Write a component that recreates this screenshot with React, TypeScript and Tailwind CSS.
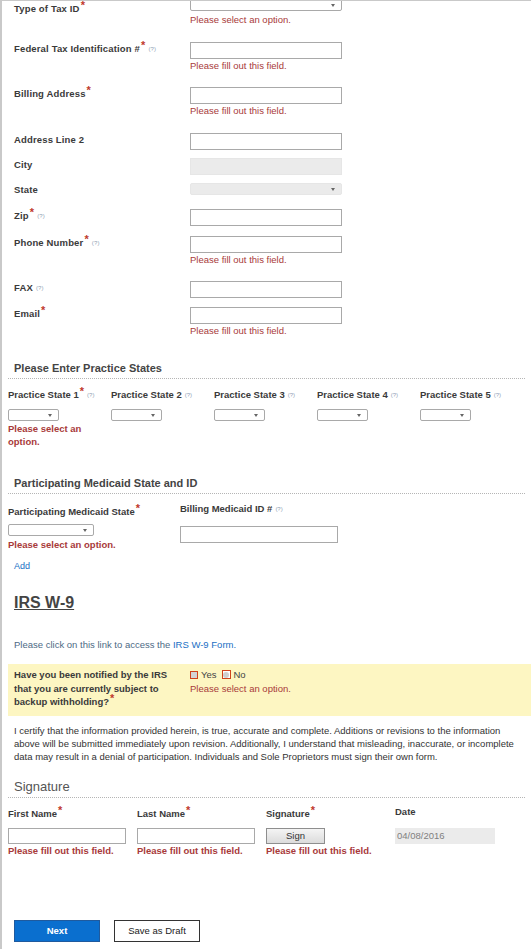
import React from "react";

const LABEL = "text-[9.5px] font-bold text-[#3a3a3a] leading-[13px]";
const ERR = "text-[9.5px] text-[#a83a3a] leading-[13px]";
const ERR_BOLD = "text-[9.5px] font-bold text-[#a83a3a] leading-[13px]";
const INPUT = "h-[17px] w-[152px] border border-[#a9a9a9] bg-white";

function Req() {
  return (
    <span className="relative -top-[3px] ml-[1px] inline-block h-[8px] text-[11px] font-bold leading-[8px] text-[#c0392b]">
      *
    </span>
  );
}

function Help() {
  return (
    <span className="relative -top-[1px] ml-[3px] text-[6px] font-normal text-[#8fa0b5]">
      (?)
    </span>
  );
}

function Select({ w, disabled }: { w: string; disabled?: boolean }) {
  return (
    <div
      className={`flex h-[12px] items-center justify-end rounded-[2px] pr-[6px] ${w} ${
        disabled
          ? "border border-[#e6e6e6] bg-[#ebebeb]"
          : "border border-[#a9a9a9] bg-white"
      }`}
    >
      <svg width="4" height="3" viewBox="0 0 4 3">
        <path d="M0 0h4L2 3z" fill="#666" />
      </svg>
    </div>
  );
}

type RowProps = {
  label: string;
  req?: boolean;
  help?: boolean;
  h: string;
  error?: string;
  children: React.ReactNode;
  labelPad?: string;
};

function Row({ label, req, help, h, error, children, labelPad = "pt-0" }: RowProps) {
  return (
    <div className={`flex ${h}`}>
      <div className={`w-[176px] tracking-[0.15px] ${LABEL} ${labelPad}`}>
        {label}
        {req && <Req />}
        {help && <Help />}
      </div>
      <div className="flex flex-col">
        {children}
        {error && <div className={ERR}>{error}</div>}
      </div>
    </div>
  );
}

function SectionHead({ title, className }: { title: string; className: string }) {
  return (
    <div className={`ml-[6px] mr-[6px] border-b border-dotted border-[#b5b5b5] pb-[3px] pl-[6px] ${className}`}>
      <h2 className="text-[11px] font-bold leading-[14px] text-[#444]">{title}</h2>
    </div>
  );
}

const PRACTICE = [1, 2, 3, 4, 5];

const SIGN_COLS = [
  { label: "First Name", kind: "input" },
  { label: "Last Name", kind: "input" },
  { label: "Signature", kind: "sign" },
];

export default function App() {
  return (
    <div className="h-[949px] w-[531px] overflow-hidden border-l-2 border-t border-[#c9c9c9] bg-white font-['Liberation_Sans',Arial,sans-serif]">
      {/* Contact rows */}
      <div className="-mt-[2px] pl-[12px]">
        <Row label="Type of Tax ID" req h="h-[43px]" error="Please select an option." labelPad="pt-[3px]">
          <Select w="w-[152px]" />
          <div className="h-[2px]" />
        </Row>
        <Row label="Federal Tax Identification #" req help h="h-[45px]" error="Please fill out this field.">
          <div className={INPUT} />
        </Row>
        <Row label="Billing Address" req h="h-[46px]" error="Please fill out this field.">
          <div className={INPUT} />
        </Row>
        <Row label="Address Line 2" h="h-[25px]">
          <div className={INPUT} />
        </Row>
        <Row label="City" h="h-[25px]">
          <div className="h-[17px] w-[152px] border border-[#e6e6e6] bg-[#ebebeb]" />
        </Row>
        <Row label="State" h="h-[26px]">
          <Select w="w-[152px]" disabled />
        </Row>
        <Row label="Zip" req help h="h-[27px]">
          <div className={INPUT} />
        </Row>
        <Row label="Phone Number" req help h="h-[45px]" error="Please fill out this field.">
          <div className={INPUT} />
        </Row>
        <Row label="FAX" help h="h-[26px]">
          <div className={INPUT} />
        </Row>
        <Row label="Email" req h="h-[45px]" error="Please fill out this field.">
          <div className={INPUT} />
        </Row>
      </div>

      {/* Practice states */}
      <SectionHead title="Please Enter Practice States" className="mt-[9px]" />
      <div className="mt-[9px] grid grid-cols-[repeat(5,103px)] pl-[6px]">
        {PRACTICE.map(n => (
          <div key={n} className="flex flex-col">
            <div className={`${LABEL} whitespace-nowrap`}>
              Practice State {n}
              {n === 1 && <Req />}
              <Help />
            </div>
            <div className="mt-[6px]">
              <Select w="w-[51px]" />
            </div>
            {n === 1 && (
              <div className={`${ERR_BOLD} mt-[1px] w-[90px]`}>Please select an option.</div>
            )}
          </div>
        ))}
      </div>

      {/* Medicaid */}
      <SectionHead title="Participating Medicaid State and ID" className="mt-[28px]" />
      <div className="mt-[11px] flex pl-[6px]">
        <div className="flex w-[172px] flex-col">
          <div className={LABEL}>
            Participating Medicaid State
            <Req />
          </div>
          <div className="mt-[6px]">
            <Select w="w-[86px]" />
          </div>
          <div className={`${ERR_BOLD} mt-[2px]`}>Please select an option.</div>
        </div>
        <div className="-mt-[3px] flex flex-col">
          <div className={LABEL}>
            Billing Medicaid ID #
            <Help />
          </div>
          <div className="mt-[9px] h-[17px] w-[158px] border border-[#a9a9a9]" />
        </div>
      </div>
      <div className="mt-[1px] pl-[12px]">
        <a className="text-[9px] leading-[13px] text-[#1a6fc4]">Add</a>
      </div>

      {/* IRS W-9 */}
      <h1 className="mt-[17px] pl-[12px] text-[16px] font-bold leading-[20px] text-[#444] underline">
        IRS W-9
      </h1>
      <p className="mt-[25px] pl-[12px] text-[9.5px] leading-[13px] text-[#4d6a85]">
        Please click on this link to access the{" "}
        <a className="text-[#1a6fc4]">IRS W-9 Form.</a>
      </p>

      <div className="ml-[6px] mt-[13px] flex h-[52px] bg-[#fdf6c2] pl-[6px] pt-[4px]">
        <div className="w-[170px] text-[9.5px] font-bold leading-[13.5px] text-[#3a3a3a]">
          Have you been notified by the IRS that you are currently subject to backup withholding?
          <Req />
        </div>
        <div className="flex flex-col pl-[6px]">
          <div className="flex items-center gap-[3px] text-[9.5px] leading-[13px] text-[#444]">
            <span className="h-[8px] w-[8px] border border-[#d0441c] bg-[#d4d4d4]" />
            <span className="mr-[2px]">Yes</span>
            <span className="flex h-[9px] w-[9px] items-center justify-center border border-[#d0441c] bg-white">
              <span className="h-[6px] w-[6px] rounded-full bg-[#cfcfcf]" />
            </span>
            <span>No</span>
          </div>
          <div className={`${ERR} mt-[1px]`}>Please select an option.</div>
        </div>
      </div>

      <p className="mt-[8px] pl-[12px] pr-[10px] text-[9.5px] leading-[13px] text-[#333]">
        I certify that the information provided herein, is true, accurate and complete. Additions or
        revisions to the information above will be submitted immediately upon revision. Additionally, I
        understand that misleading, inaccurate, or incomplete data may result in a denial of
        participation. Individuals and Sole Proprietors must sign their own form.
      </p>

      {/* Signature */}
      <div className="ml-[6px] mr-[6px] mt-[16px] border-b border-dotted border-[#b5b5b5] pb-[2px] pl-[6px]">
        <h2 className="text-[13px] leading-[16px] text-[#555]">Signature</h2>
      </div>
      <div className="mt-[9px] grid grid-cols-[repeat(4,129px)] pl-[6px]">
        {SIGN_COLS.map(c => (
          <div key={c.label} className="flex flex-col">
            <div className={LABEL}>
              {c.label}
              <Req />
            </div>
            <div className="mt-[8px] flex">
              {c.kind === "input" ? (
                <div className="h-[16px] w-[118px] border border-[#a9a9a9]" />
              ) : (
                <button className="block h-[16px] w-[59px] border border-[#8e8e8e] bg-gradient-to-b from-[#f4f4f4] to-[#dcdcdc] text-[9.5px] leading-[14px] text-[#333]">
                  Sign
                </button>
              )}
            </div>
            <div className={ERR_BOLD}>Please fill out this field.</div>
          </div>
        ))}
        <div className="-mt-[2px] flex flex-col">
          <div className={LABEL}>Date</div>
          <div className="mt-[10px] flex h-[16px] w-[100px] items-center bg-[#ebebeb] pl-[2px] text-[9.5px] text-[#808080]">
            04/08/2016
          </div>
        </div>
      </div>

      {/* Actions */}
      <div className="mt-[63px] flex gap-[14px] pl-[12px]">
        <button className="h-[22px] w-[86px] border border-[#1f5a9e] bg-[#0a6fcf] text-[9.5px] font-bold text-white">
          Next
        </button>
        <button className="h-[22px] w-[86px] border border-[#333] bg-white text-[9.5px] text-[#222]">
          Save as Draft
        </button>
      </div>
    </div>
  );
}
